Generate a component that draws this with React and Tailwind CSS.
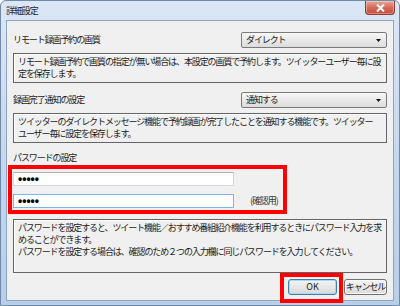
export default function App() {
  const selectCls =
    "w-[146px] h-[16px] border border-[#7a7a7a] rounded-[2px] bg-gradient-to-b from-[#f7f7f7] to-[#dcdcdc] pl-[4px] pr-[5px] flex items-center justify-between";
  const descCls =
    "border border-[#656565] bg-[#f0f0f0] pl-[4px] pt-[2px] leading-[12px] shadow-[inset_1px_1px_0_#ffffff]";
  const Arrow = () => (
    <svg width="5" height="3" viewBox="0 0 5 3">
      <path d="M0 0h5L2.5 3z" fill="#111" />
    </svg>
  );
  return (
    <div className="relative w-[400px] h-[306px] overflow-hidden rounded-t-[6px] border border-[#6f89a8] bg-gradient-to-b from-[#dbe7f5] via-[#c6d8ee] to-[#b9cfe8] font-['Noto_Sans_CJK_JP',sans-serif] text-[9px] tracking-[-1.1px] text-[#1b1b1b]">
      {/* title bar */}
      <div className="h-[19px] flex items-start justify-between pl-[5px] pr-[4px]">
        <span className="mt-[3px] leading-[13px] text-[#1a2433]">詳細設定</span>
        <div className="w-[30px] h-[14px] rounded-b-[4px] border border-t-0 border-[#8b3a30] bg-gradient-to-b from-[#e9a89a] via-[#d46a5a] to-[#c8493b] flex items-center justify-center shadow-[inset_0_0_0_1px_rgba(255,255,255,0.35)]">
          <svg width="9" height="8" viewBox="0 0 9 8">
            <path d="M1 0.5L8 7.5M8 0.5L1 7.5" stroke="#ffffff" strokeWidth="2" />
          </svg>
        </div>
      </div>

      {/* content */}
      <div className="ml-[5px] w-[388px] h-[281px] border border-[#8ea4bf] bg-[#f0f0f0] px-[6px] pt-[11px]">
        <div className="h-[16px] flex items-center justify-between">
          <span>リモート録画予約の画質</span>
          <div className={selectCls}>
            <span>ダイレクト</span>
            <Arrow />
          </div>
        </div>
        <div className={`mt-[5px] h-[30px] ${descCls}`}>
          リモート録画予約で画質の指定が無い場合は、本設定の画質で予約します。ツイッターユーザー毎に設
          <br />
          定を保存します。
        </div>

        <div className="mt-[9px] h-[16px] flex items-center justify-between">
          <span>録画完了通知の設定</span>
          <div className={selectCls}>
            <span>通知する</span>
            <Arrow />
          </div>
        </div>
        <div className={`mt-[5px] h-[30px] ${descCls}`}>
          ツイッターのダイレクトメッセージ機能で予約録画が完了したことを通知する機能です。ツイッター
          <br />
          ユーザー毎に設定を保存します。
        </div>

        <div className="mt-[8px] h-[14px] flex items-center">パスワードの設定</div>
        <div className="mt-[7px] w-[221px] h-[14px] bg-white border border-[#d5d8de] border-t-[#abadb3] pl-[4px] flex items-center font-['Liberation_Sans',sans-serif] text-[12px] font-bold tracking-[0px] text-black">
          •••••
        </div>
        <div className="mt-[8px] h-[14px] flex items-center">
          <div className="w-[221px] h-[14px] bg-white border border-[#7eb4ea] pl-[4px] flex items-center font-['Liberation_Sans',sans-serif] text-[12px] font-bold tracking-[0px] text-black">
            •••••
          </div>
          <span className="ml-[16px] text-[#333]">(確認用)</span>
        </div>

        <div className={`mt-[11px] h-[54px] ${descCls}`}>
          パスワードを設定すると、ツイート機能／おすすめ番組紹介機能を利用するときにパスワード入力を求
          <br />
          めることができます。
          <br />
          パスワードを設定する場合は、確認のため２つの入力欄に同じパスワードを入力してください。
        </div>

        <div className="mt-[6px] h-[16px] flex justify-end">
          <div className="w-[49px] h-[16px] rounded-[3px] border border-[#3c7fb1] bg-gradient-to-b from-[#f4f4f4] to-[#dadada] shadow-[inset_0_0_0_1px_#a6dbf8] flex items-center justify-center tracking-[0px]">
            OK
          </div>
          <div className="ml-[7px] w-[43px] h-[16px] rounded-[3px] border border-[#707070] bg-gradient-to-b from-[#f4f4f4] to-[#dadada] shadow-[inset_0_0_0_1px_#fcfcfc] flex items-center justify-center">
            キャンセル
          </div>
        </div>
      </div>

      {/* annotation boxes */}
      <div className="absolute left-[7px] top-[164px] w-[279px] h-[49px] border-4 border-[#ff0000]" />
      <div className="absolute left-[279px] top-[272px] w-[63px] h-[30px] border-4 border-[#ff0000]" />
    </div>
  );
}
